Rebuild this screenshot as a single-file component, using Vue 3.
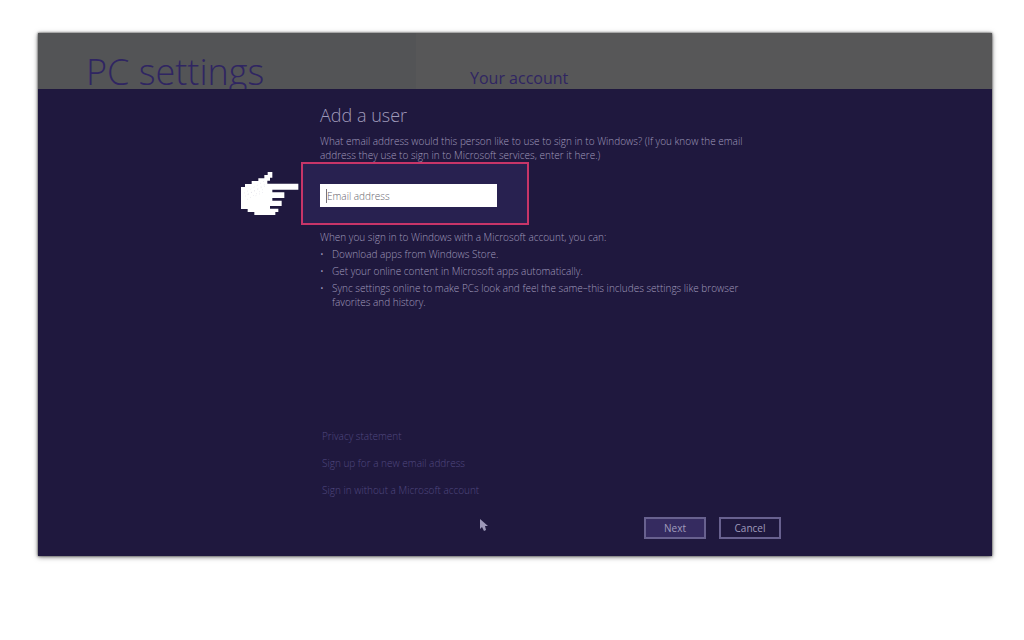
<script setup>
import { ref } from 'vue'

const email = ref('')
const benefits = [
  'Download apps from Windows Store.',
  'Get your online content in Microsoft apps automatically.',
  'Sync settings online to make PCs look and feel the same–this includes settings like browser favorites and history.'
]
const links = [
  'Privacy statement',
  'Sign up for a new email address',
  'Sign in without a Microsoft account'
]
</script>

<template>
  <div class="page">
    <div class="screen">
      <header class="settings">
        <div class="side"><h1>PC settings</h1></div>
        <div class="pane"><h2>Your account</h2></div>
      </header>
      <main class="dialog">
        <form class="content" @submit.prevent>
          <h3>Add a user</h3>
          <label class="intro" for="email">What email address would this person like to use to sign in to Windows? (If you know the email address they use to sign in to Microsoft services, enter it here.)</label>
          <div class="callout">
            <input id="email" v-model="email" type="email" placeholder="Email address" />
            <i class="caret"></i>
            <svg class="hand" viewBox="0 0 210 180" aria-hidden="true">
              <path fill="#fff" d="M18 66H30V57H50V48H70V40H88V30H98V21H112V38H105V47H97V56H190V74H112V82H148V99H112V107H140V123H105V131H130V141H121V150H58V141H38V132H18Z" />
              <path fill="none" stroke="#d5d2df" stroke-width="2" stroke-dasharray="2 9" d="M28 84L88 48M30 94L96 54M38 88L92 62M36 104L86 72M62 92L84 82" />
            </svg>
          </div>
          <p class="lead">When you sign in to Windows with a Microsoft account, you can:</p>
          <ul>
            <li v-for="item in benefits" :key="item">{{ item }}</li>
          </ul>
          <nav>
            <a v-for="link in links" :key="link" href="#">{{ link }}</a>
          </nav>
          <div class="actions">
            <button class="next" type="submit">Next</button>
            <button type="button">Cancel</button>
          </div>
          <svg class="pointer" viewBox="0 0 8 12" aria-hidden="true">
            <path fill="#9d98b8" d="M0 0V10L2 8L4 12L6 11L5 7H8Z" />
          </svg>
        </form>
      </main>
    </div>
  </div>
</template>

<style>
body {
  background: #fff;
}
</style>

<style scoped>
* {
  box-sizing: border-box;
}
.page {
  padding: 33px 32px 40px 38px;
}
.screen {
  font-family: "Open Sans", "Noto Sans", sans-serif;
  font-size: 10px;
  font-weight: 300;
  line-height: 14px;
  color: #a09bbc;
  background: #1f183e;
  box-shadow: 0 0 2px #444, 0 1px 5px #777;
}
h1,
h2,
h3,
p,
ul {
  margin: 0;
  padding: 0;
  font-weight: 300;
}
.settings {
  display: flex;
  height: 56px;
  overflow: hidden;
  color: #2f2562;
}
.side {
  width: 378px;
  padding: 15px 0 0 48px;
  background: #535456;
}
.pane {
  flex: 1;
  padding: 33px 0 0 54px;
  background: #575758;
}
h1 {
  font-size: 36px;
  line-height: 48px;
}
h2 {
  font-size: 16px;
  line-height: 24px;
  font-weight: 400;
}
.dialog {
  padding: 14px 211px 17px 282px;
}
.content {
  position: relative;
}
h3 {
  font-size: 18px;
  line-height: 24px;
}
.intro {
  display: block;
  width: 450px;
  margin-top: 7px;
}
.callout {
  position: relative;
  width: 228px;
  margin: 0 0 0 -19px;
  padding: 20px 30px 16px 17px;
  border: 2px solid #c73568;
  background: #282150;
}
input {
  display: block;
  width: 100%;
  height: 23px;
  padding: 0 7px;
  border: 0;
  border-radius: 0;
  outline: 0;
  background: #fff;
  color: #555;
  font: inherit;
}
input::placeholder {
  color: #66646e;
  opacity: 1;
}
.caret {
  position: absolute;
  left: 23px;
  top: 25px;
  width: 1px;
  height: 14px;
  background: #77757d;
}
.hand {
  position: absolute;
  left: -68px;
  top: 1px;
  width: 70px;
  height: 60px;
}
.lead {
  margin-top: 5px;
}
ul {
  width: 450px;
  margin-top: 3px;
  list-style: none;
}
li {
  position: relative;
  margin-bottom: 3px;
  padding-left: 12px;
}
li::before {
  content: "•";
  position: absolute;
  left: 0;
}
nav {
  display: flex;
  flex-direction: column;
  align-items: flex-start;
  gap: 13px;
  margin: 120px 0 0 2px;
}
a {
  color: #514980;
  text-decoration: none;
}
.actions {
  display: flex;
  justify-content: flex-end;
  gap: 13px;
  margin-top: 20px;
}
button {
  width: 62px;
  height: 22px;
  padding: 0;
  border: 2px solid #68618f;
  border-radius: 0;
  background: transparent;
  color: #a09bbc;
  font: inherit;
  font-weight: 400;
}
.next {
  background: #352b60;
}
.pointer {
  position: absolute;
  left: 160px;
  bottom: 8px;
  width: 8px;
  height: 12px;
}
</style>
